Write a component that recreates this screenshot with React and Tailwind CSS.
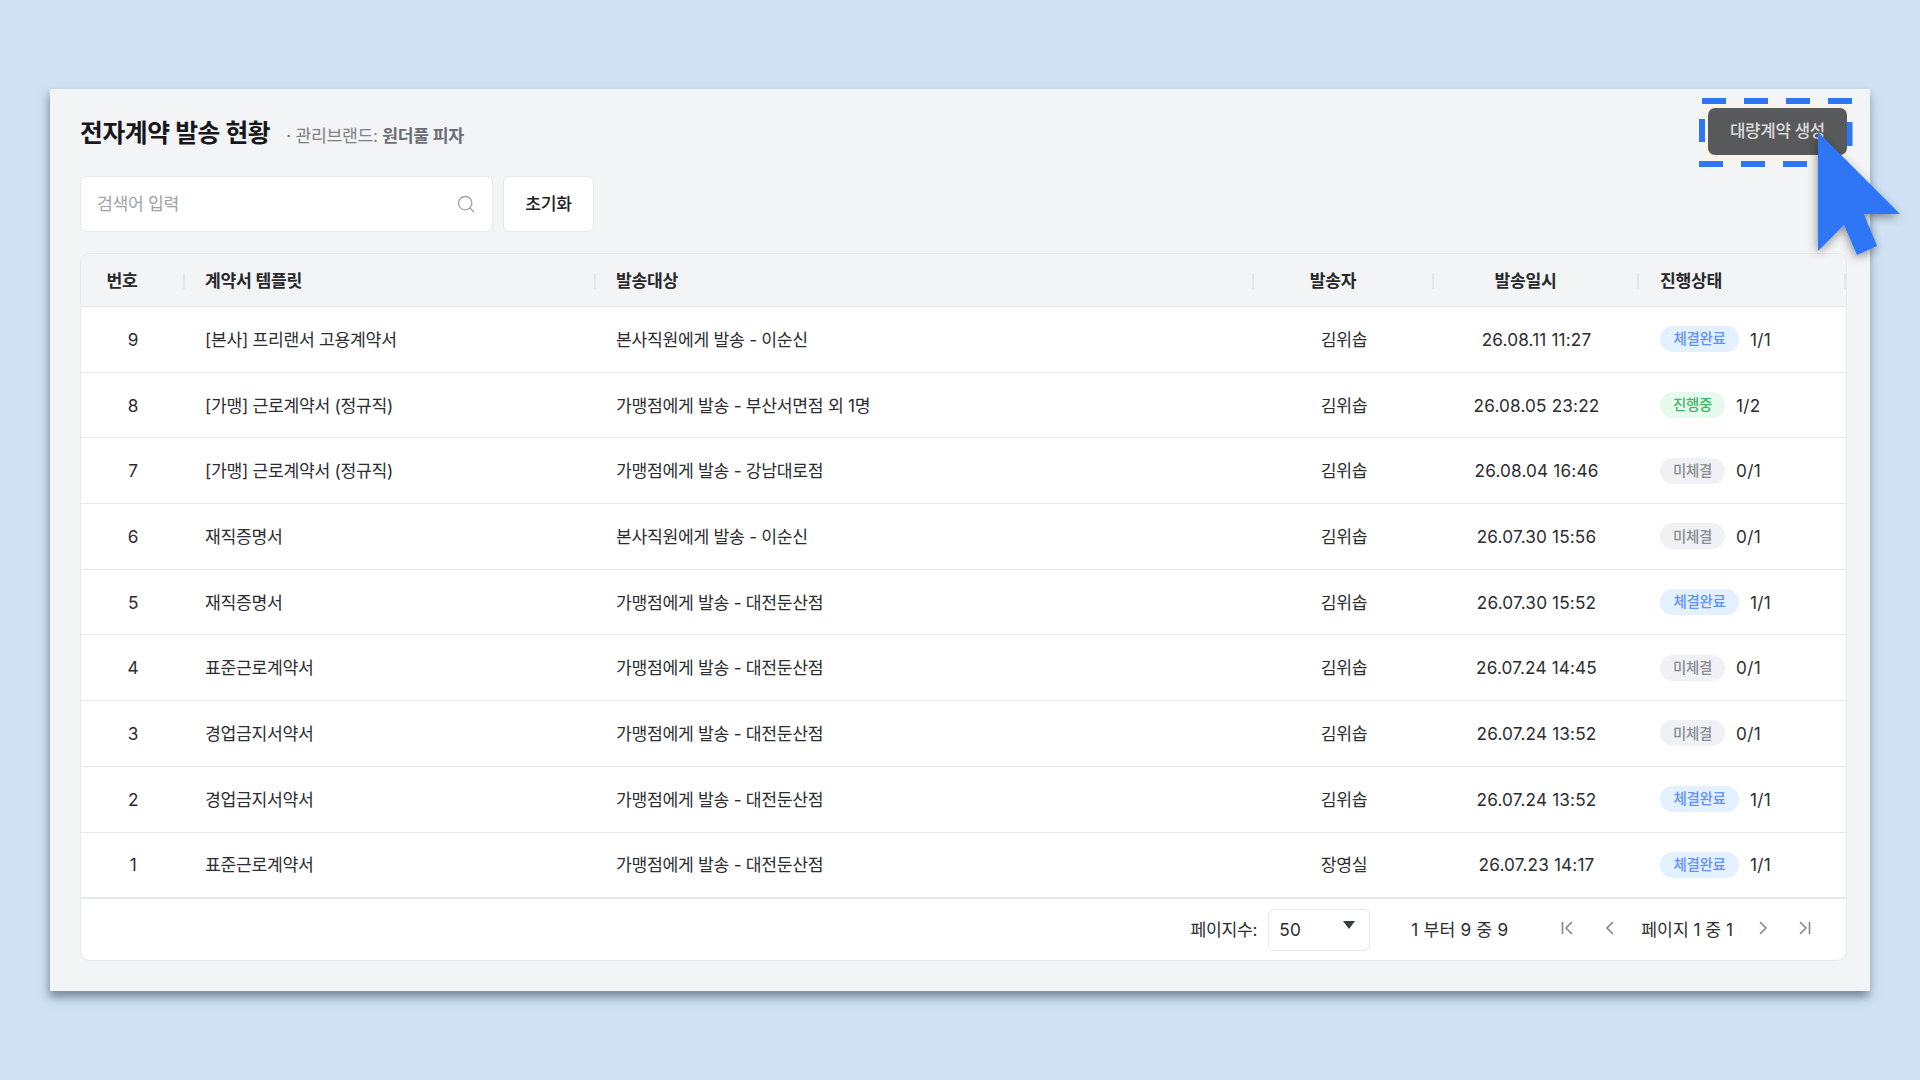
import React from "react";
import { Search } from "lucide-react";

const FONT = "font-['Inter','Noto_Sans_CJK_KR',sans-serif]";
const rows = [
  [9, "[본사] 프리랜서 고용계약서", "본사직원에게 발송 - 이순신", "김위솝", "26.08.11 11:27", "done", "1/1"],
  [8, "[가맹] 근로계약서 (정규직)", "가맹점에게 발송 - 부산서면점 외 1명", "김위솝", "26.08.05 23:22", "progress", "1/2"],
  [7, "[가맹] 근로계약서 (정규직)", "가맹점에게 발송 - 강남대로점", "김위솝", "26.08.04 16:46", "none", "0/1"],
  [6, "재직증명서", "본사직원에게 발송 - 이순신", "김위솝", "26.07.30 15:56", "none", "0/1"],
  [5, "재직증명서", "가맹점에게 발송 - 대전둔산점", "김위솝", "26.07.30 15:52", "done", "1/1"],
  [4, "표준근로계약서", "가맹점에게 발송 - 대전둔산점", "김위솝", "26.07.24 14:45", "none", "0/1"],
  [3, "경업금지서약서", "가맹점에게 발송 - 대전둔산점", "김위솝", "26.07.24 13:52", "none", "0/1"],
  [2, "경업금지서약서", "가맹점에게 발송 - 대전둔산점", "김위솝", "26.07.24 13:52", "done", "1/1"],
  [1, "표준근로계약서", "가맹점에게 발송 - 대전둔산점", "장영실", "26.07.23 14:17", "done", "1/1"],
];
const pills = {
  done: ["체결완료", "bg-[#e3f0ff] text-[#5f93f5] w-[79px]"],
  progress: ["진행중", "bg-[#e8f9ee] text-[#3cb768] w-[65px]"],
  none: ["미체결", "bg-[#f0f1f4] text-[#8a8d93] w-[65px]"],
};
const GRID = "grid grid-cols-[104px_411px_658px_180px_205px_1fr]";

function Head({ children, center, sep = true, pl = "pl-[20px]" }) {
  return (
    <div className={`relative flex items-center h-full pt-[2px] ${center ? "justify-center pr-[22px]" : pl}`}>
      {children}
      {sep && <span className="absolute right-0 top-[19px] h-[16px] w-[2px] bg-[#e6e8ec]" />}
    </div>
  );
}

function Chev({ d }) {
  return (
    <svg width="18" height="18" viewBox="0 0 18 18" fill="none" stroke="#83868c" strokeWidth="1.6" strokeLinecap="round" strokeLinejoin="round">
      <path d={d} />
    </svg>
  );
}

function Annotation() {
  return (
    <div className="absolute left-0 top-0 pointer-events-none">
      <svg width="1920" height="300" viewBox="0 0 1920 300" fill="none">
        <defs>
          <filter id="cursorShadow" x="-30%" y="-30%" width="170%" height="170%">
            <feDropShadow dx="-1" dy="3" stdDeviation="5" floodColor="#000" floodOpacity="0.4" />
          </filter>
        </defs>
        <g fill="#2f76f6">
          <rect x="1702" y="98" width="24" height="6" />
          <rect x="1744" y="98" width="24" height="6" />
          <rect x="1786" y="98" width="24" height="6" />
          <rect x="1828" y="98" width="24" height="6" />
          <rect x="1699" y="161" width="24" height="6" />
          <rect x="1741" y="161" width="24" height="6" />
          <rect x="1783" y="161" width="24" height="6" />
          <rect x="1699" y="119" width="6" height="23" />
          <rect x="1847" y="122" width="5.5" height="24" />
        </g>
        <path d="M1818 132 L1900 214 L1864 214 L1877 246 L1857 255 L1844 225 L1818 251 Z" fill="#2f76f6" filter="url(#cursorShadow)" />
      </svg>
    </div>
  );
}

export default function App() {
  return (
    <div className={`relative w-[1920px] h-[1080px] overflow-hidden bg-[#cfe1f2] pl-[50px] pt-[89px] ${FONT} text-[17.2px] tracking-[-0.3px] text-[#2b2d31]`}>
      <div className="w-[1820px] h-[902px] bg-[#f3f4f6] pl-[30px] pr-[23px] pt-[19px] shadow-[-1px_6px_9px_rgba(30,50,70,0.5)]">
        <div className="flex items-center justify-between h-[47px]">
          <div className="flex items-center pt-[4px]">
            <h1 className="text-[24.8px] font-bold text-[#16181c] tracking-[-0.4px]">전자계약 발송 현황</h1>
            <span className="ml-[16px] mt-[4px] text-[17.2px] text-[#7c8087]">· 관리브랜드: <b className="font-semibold text-[#6a6e75]">원더풀 피자</b></span>
          </div>
          <div className="relative">
            <div className="absolute -left-[6px] -right-[3px] -top-[7px] -bottom-[10px] bg-[#f7f4ec]" />
            <button className="relative w-[139px] h-[47px] rounded-[7px] bg-[#58595b] text-[#dcdcdc] text-[16.8px] font-medium pt-[1px]">대량계약 생성</button>
          </div>
        </div>

        <div className="flex gap-[10px] mt-[21px]">
          <div className="flex items-center justify-between w-[413px] h-[56px] bg-white border border-[#e5e7eb] rounded-[7px] pl-[16px] pr-[16px]">
            <span className="text-[#9ea2a9]">검색어 입력</span>
            <Search size={20} strokeWidth={1.6} className="text-[#9ea2a9]" />
          </div>
          <button className="w-[91px] h-[56px] bg-white border border-[#e5e7eb] rounded-[7px] font-medium text-[#1f2125]">초기화</button>
        </div>

        <div className="mt-[21px] bg-white border border-[#e8e9ed] rounded-[10px] overflow-hidden">
          <div className={`${GRID} h-[53px] bg-[#f3f4f6] border-b border-[#e5e7eb] font-semibold text-[#26282c]`}>
            <Head center>번호</Head>
            <Head>계약서 템플릿</Head>
            <Head>발송대상</Head>
            <Head center>발송자</Head>
            <Head center>발송일시</Head>
            <Head pl="pl-[21px]">진행상태</Head>
          </div>
          {rows.map((r) => (
            <div key={r[0]} className={`${GRID} h-[65.7px] items-center border-b border-[#e7e8ec]`}>
              <div className="text-center pt-[1px]">{r[0]}</div>
              <div className="pl-[20px] pt-[1px]">{r[1]}</div>
              <div className="pl-[20px] pt-[1px]">{r[2]}</div>
              <div className="text-center pt-[1px]">{r[3]}</div>
              <div className="text-center pt-[1px] tracking-[0.15px]">{r[4]}</div>
              <div className="pl-[21px] flex items-center gap-[11px]">
                <span className={`flex items-center justify-center h-[26px] rounded-full text-[14.5px] font-medium ${pills[r[5]][1]}`}>{pills[r[5]][0]}</span>
                <span className="tracking-[0.3px] pt-[1px]">{r[6]}</span>
              </div>
            </div>
          ))}
          <div className="flex items-center justify-end h-[62px] border-t border-[#e7e8ec] pr-[32px] pt-[1px]">
            <span>페이지수:</span>
            <div className="relative flex items-center w-[102px] h-[42px] ml-[11px] border border-[#e5e7eb] rounded-[6px] pl-[10px]">
              <span className="tracking-[0.3px]">50</span>
              <span className="absolute left-[74px] top-[11px] w-0 h-0 border-l-[6px] border-r-[6px] border-t-[8px] border-l-transparent border-r-transparent border-t-[#3a3c40]" />
            </div>
            <span className="ml-[41px] tracking-[0.2px]">1 부터 9 중 9</span>
            <div className="flex items-center ml-[50px] -translate-y-[2px]">
              <Chev d="M4.5 3.5v11M13.5 3.5 8 9l5.5 5.5" />
            </div>
            <div className="flex items-center ml-[25px] -translate-y-[2px]">
              <Chev d="M11.5 3.5 6 9l5.5 5.5" />
            </div>
            <span className="ml-[22px] tracking-normal">페이지 1 중 1</span>
            <div className="flex items-center ml-[21px] -translate-y-[2px]">
              <Chev d="M6.5 3.5 12 9l-5.5 5.5" />
            </div>
            <div className="flex items-center ml-[24px] -translate-y-[2px]">
              <Chev d="M13.5 3.5v11M4.5 3.5 10 9l-5.5 5.5" />
            </div>
          </div>
        </div>
      </div>
      <Annotation />
    </div>
  );
}
